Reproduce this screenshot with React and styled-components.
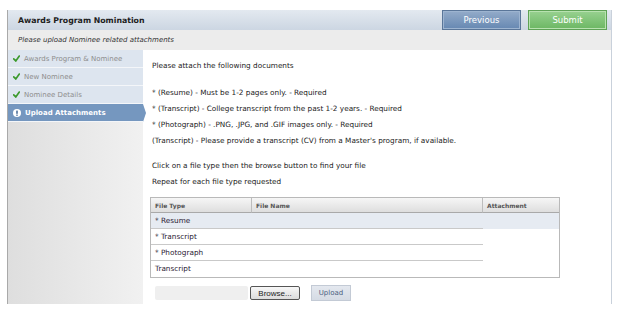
import React from "react";
import styled, { createGlobalStyle } from "styled-components";

const GlobalStyle = createGlobalStyle`
  body {
    margin: 0;
    background: #fff;
    font-family: "DejaVu Sans", Verdana, sans-serif;
  }
`;

const Frame = styled.div`
  margin: 10px 0 0 7px;
  width: 603px;
  border-left: 1px solid #a9a9a9;
  border-right: 1px solid #c9d1db;
`;

const Header = styled.div`
  height: 20px;
  display: flex;
  align-items: center;
  justify-content: space-between;
  padding: 0 4px 0 10px;
  background: linear-gradient(#e3e9f0, #ccd6e2);
`;

const Title = styled.h1`
  margin: 0;
  font-size: 7.8px;
  font-weight: bold;
  color: #1d1d1d;
`;

const Actions = styled.div`
  display: flex;
  gap: 7px;
`;

const HeadButton = styled.button`
  width: 79px;
  height: 20px;
  padding: 0;
  font-family: inherit;
  font-size: 8.5px;
  color: #fff;
  border: 1px solid ${(p) => (p.$green ? "#5ea256" : "#5a7699")};
  box-shadow: inset 0 0 0 1px ${(p) => (p.$green ? "#b8e2b0" : "#9db4d0")};
  background: ${(p) =>
    p.$green
      ? "linear-gradient(#98d190, #6cb763)"
      : "linear-gradient(#93abc9, #6688b2)"};
`;

const SubHeader = styled.div`
  height: 20px;
  display: flex;
  align-items: center;
  padding-left: 10px;
  background: #ececec;
  font-size: 7px;
  font-style: italic;
  color: #333;
`;

const Body = styled.div`
  display: flex;
  height: 254px;
`;

const Sidebar = styled.nav`
  width: 135px;
  background: linear-gradient(90deg, #dedede, #f1f1f1);
`;

const Step = styled.div`
  position: relative;
  height: 17px;
  display: flex;
  align-items: center;
  gap: 4px;
  padding-left: 5px;
  border-bottom: 1px solid #f4f6f9;
  font-size: 7px;
  font-weight: ${(p) => (p.$active ? "bold" : "normal")};
  color: ${(p) => (p.$active ? "#fff" : "#8d8d8d")};
  background: ${(p) => (p.$active ? "#7597bf" : "#dde5ef")};

  ${(p) =>
    p.$active &&
    `
    &::after {
      content: "";
      position: absolute;
      right: -3px;
      top: 0;
      border-top: 9px solid transparent;
      border-bottom: 9px solid transparent;
      border-left: 3px solid #7597bf;
    }
  `}
`;

const Content = styled.main`
  flex: 1;
  background: #fff;
  padding: 8px 0 0 9px;
  font-size: 7.3px;
  color: #222;
`;

const Line = styled.p`
  margin: 0;
  margin-top: ${(p) => p.$gap || 0}px;
  line-height: 16px;
  height: 16px;
  white-space: nowrap;
`;

const Table = styled.div`
  margin: 7px 0 0 -2px;
  width: 408px;
  border: 1px solid #b9b9b9;
  display: grid;
  grid-template-columns: 101px 231px 1fr;
`;

const HeadCell = styled.div`
  height: 14px;
  display: flex;
  align-items: center;
  padding-left: 4px;
  font-size: 6px;
  font-weight: bold;
  color: #555;
  background: linear-gradient(#f6f6f6, #dedede);
  border-bottom: 1px solid #a9a9a9;
  border-right: ${(p) => (p.$last ? "none" : "1px solid #bdbdbd")};
`;

const Cell = styled.div`
  height: 15px;
  display: flex;
  align-items: center;
  padding-left: 4px;
  color: #2b2233;
  background: ${(p) => (p.$selected ? "#e6ebf2" : "#fff")};
  border-bottom: ${(p) => (p.$ruled ? "1px solid #c9c9c9" : "1px solid transparent")};
`;

const UploadRow = styled.div`
  display: flex;
  align-items: center;
  margin: 7px 0 0 3px;
`;

const FileField = styled.div`
  width: 93px;
  height: 14px;
  background: #efefef;
  border-radius: 2px;
`;

const BrowseButton = styled.button`
  margin-left: 2px;
  width: 50px;
  height: 14px;
  padding: 0;
  font-family: "Liberation Sans", Arial, sans-serif;
  font-size: 8px;
  color: #222;
  border: 1px solid #555;
  border-radius: 2px;
  background: linear-gradient(#f7f7f7, #dcdcdc);
`;

const UploadButton = styled.button`
  margin-left: 11px;
  width: 40px;
  height: 16px;
  padding: 0;
  font-family: inherit;
  font-size: 7px;
  color: #4c5f80;
  border: 1px solid #c3cad5;
  background: linear-gradient(#e4e8ef, #d5dbe4);
`;

const Check = () => (
  <svg width="7" height="7" viewBox="0 0 10 10">
    <path d="M1 5.5 L4 8.5 L9 1.5" fill="none" stroke="#3c9a2c" strokeWidth="2.4" strokeLinecap="round" />
  </svg>
);

const Info = () => (
  <svg width="8" height="8" viewBox="0 0 10 10">
    <circle cx="5" cy="5" r="5" fill="#fff" />
    <rect x="4" y="2" width="2" height="4" fill="#4d6f99" />
    <rect x="4" y="7" width="2" height="1.5" fill="#4d6f99" />
  </svg>
);

const steps = [
  { label: "Awards Program & Nominee", done: true },
  { label: "New Nominee", done: true },
  { label: "Nominee Details", done: true },
  { label: "Upload Attachments", active: true },
];

const rows = ["* Resume", "* Transcript", "* Photograph", "Transcript"];

export default function App() {
  return (
    <>
      <GlobalStyle />
      <Frame>
        <Header>
          <Title>Awards Program Nomination</Title>
          <Actions>
            <HeadButton>Previous</HeadButton>
            <HeadButton $green>Submit</HeadButton>
          </Actions>
        </Header>
        <SubHeader>Please upload Nominee related attachments</SubHeader>
        <Body>
          <Sidebar>
            {steps.map((s) => (
              <Step key={s.label} $active={s.active}>
                {s.active ? <Info /> : <Check />}
                {s.label}
              </Step>
            ))}
          </Sidebar>
          <Content>
            <Line>Please attach the following documents</Line>
            <Line $gap={11}>* (Resume) - Must be 1-2 pages only. - Required</Line>
            <Line>* (Transcript) - College transcript from the past 1-2 years. - Required</Line>
            <Line>* (Photograph) - .PNG, .JPG, and .GIF images only. - Required</Line>
            <Line>(Transcript) - Please provide a transcript (CV) from a Master's program, if available.</Line>
            <Line $gap={9}>Click on a file type then the browse button to find your file</Line>
            <Line>Repeat for each file type requested</Line>
            <Table>
              <HeadCell>File Type</HeadCell>
              <HeadCell>File Name</HeadCell>
              <HeadCell $last>Attachment</HeadCell>
              {rows.map((r, i) => {
                const last = i === rows.length - 1;
                return (
                  <React.Fragment key={r + i}>
                    <Cell $selected={i === 0} $ruled={!last}>{r}</Cell>
                    <Cell $selected={i === 0} $ruled={!last} />
                    <Cell $selected={i === 0} />
                  </React.Fragment>
                );
              })}
            </Table>
            <UploadRow>
              <FileField />
              <BrowseButton>Browse...</BrowseButton>
              <UploadButton>Upload</UploadButton>
            </UploadRow>
          </Content>
        </Body>
      </Frame>
    </>
  );
}
